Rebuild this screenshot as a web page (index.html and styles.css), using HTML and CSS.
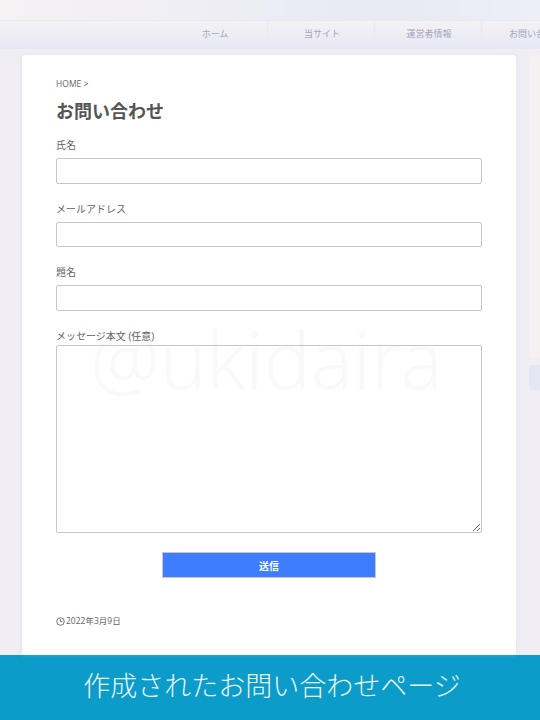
FILE: index.html
```html
<!DOCTYPE html>
<html lang="ja">
<head>
<meta charset="utf-8">
<title>お問い合わせ</title>
<link rel="stylesheet" href="styles.css">
</head>
<body>
<div class="page">
  <div class="topbar"></div>
  <nav class="nav">
    <a class="nav-item">ホーム</a>
    <a class="nav-item">当サイト</a>
    <a class="nav-item">運営者情報</a>
    <a class="nav-item">お問い合わせ</a>
  </nav>
  <div class="content">
    <main class="card">
      <div class="crumb"><span class="crumb-home">HOME</span> &gt;</div>
      <h1 class="title">お問い合わせ</h1>
      <form class="form">
        <label class="field"><span class="label">氏名</span><input class="input" type="text"></label>
        <label class="field"><span class="label">メールアドレス</span><input class="input" type="text"></label>
        <label class="field"><span class="label">題名</span><input class="input" type="text"></label>
        <label class="field field-msg"><span class="label label-msg">メッセージ本文 (任意)</span><textarea class="textarea"></textarea></label>
        <button class="submit" type="button">送信</button>
      </form>
      <div class="date">
        <svg class="clock" viewBox="0 0 10 10" width="9" height="9"><circle cx="5" cy="5" r="4.2" fill="none" stroke="#555" stroke-width="0.9"/><path d="M5 2.4V5.2H7.2" fill="none" stroke="#555" stroke-width="0.9"/></svg>
        <span>2022年3月9日</span>
      </div>
      <div class="watermark">@ukidaira</div>
    </main>
    <aside class="side">
      <div class="side-card"></div>
      <div class="side-btn"></div>
    </aside>
  </div>
  <div class="caption">作成されたお問い合わせページ</div>
</div>
</body>
</html>
```
FILE: styles.css
```css
* { box-sizing: border-box; }
html, body { margin: 0; padding: 0; }
body {
  font-family: "Open Sans", "Noto Sans CJK JP", sans-serif;
  color: #555;
  background: #f0eef4;
}
.page { width: 540px; height: 720px; overflow: hidden; display: flex; flex-direction: column; }
.topbar {
  height: 21px;
  flex: none;
  background: linear-gradient(90deg, #f5f2f4 0%, #efeef4 35%, #e8e9f3 70%, #eeeef6 100%);
  border-bottom: 1px solid #e6e8f4;
}
.nav {
  height: 28px;
  flex: none;
  display: flex;
  padding-left: 161px;
  background: linear-gradient(180deg, #f5f2f4 0%, #e5e7f3 100%);
  overflow: hidden;
}
.nav-item {
  flex: none;
  width: 107px;
  height: 28px;
  padding-left: 2px;
  line-height: 25px;
  text-align: center;
  font-size: 9px;
  color: #a5a5bd;
  border-right: 1px solid #e6e8f2;
  white-space: nowrap;
}
.content { height: 606px; flex: none; display: flex; padding: 6px 0 0 22px; gap: 14px; }
.card {
  position: relative;
  flex: none;
  width: 494px;
  height: 600px;
  background: #fff;
  border-radius: 3px;
  padding: 22px 34px 0;
  box-shadow: 0 0 4px rgba(200, 200, 215, 0.35);
}
.crumb { font-size: 8.5px; line-height: 13px; color: #555; height: 13px; }
.crumb-home { color: #6b5f62; }
.title { margin: 9px 0 0; font-size: 18px; line-height: 24px; font-weight: 700; color: #555; height: 24px; }
.form { display: flex; flex-direction: column; margin-top: 16px; }
.field { display: block; margin-bottom: 19px; }
.label { display: block; font-size: 10px; line-height: 13px; height: 19px; color: #636363; }
.input {
  display: block;
  width: 426px;
  height: 25.5px;
  margin: 0;
  background: #fff;
  border: 1px solid #c6c6c6;
  border-radius: 2px;
  outline: none;
}
.field-msg { margin-bottom: 19px; }
.label-msg { height: 15.5px; }
.textarea {
  display: block;
  width: 426px;
  height: 188px;
  margin: 0;
  background: transparent;
  border: 1px solid #c6c6c6;
  border-radius: 2px;
  outline: none;
}
.submit {
  align-self: center;
  width: 214px;
  height: 26px;
  padding: 0;
  background: #3e7dff;
  border: 1px solid #c6c6c6;
  color: #fff;
  font-family: inherit;
  font-size: 10px;
  font-weight: 700;
}
.date {
  display: flex;
  align-items: center;
  gap: 1px;
  margin-top: 36px;
  font-size: 8.5px;
  line-height: 14px;
  color: #636363;
}
.clock { flex: none; }
.watermark {
  position: absolute;
  left: 68px;
  top: 254px;
  font-family: "Noto Sans", sans-serif;
  font-size: 78.5px;
  line-height: 100px;
  font-weight: 300;
  color: #000;
  opacity: 0.018;
  white-space: nowrap;
  pointer-events: none;
}
.side { flex: none; width: 40px; margin-left: -1px; }
.side-card { height: 303px; background: #f5f1f3; border-radius: 3px 0 0 3px; }
.side-btn { height: 25px; margin-top: 7px; background: #e4e6f1; border-radius: 3px 0 0 3px; }
.caption {
  height: 65px;
  flex: none;
  padding-left: 4px;
  background: #0c9cc9;
  color: #eaf7fb;
  font-size: 27px;
  line-height: 62px;
  font-weight: 200;
  text-align: center;
  white-space: nowrap;
}
```
